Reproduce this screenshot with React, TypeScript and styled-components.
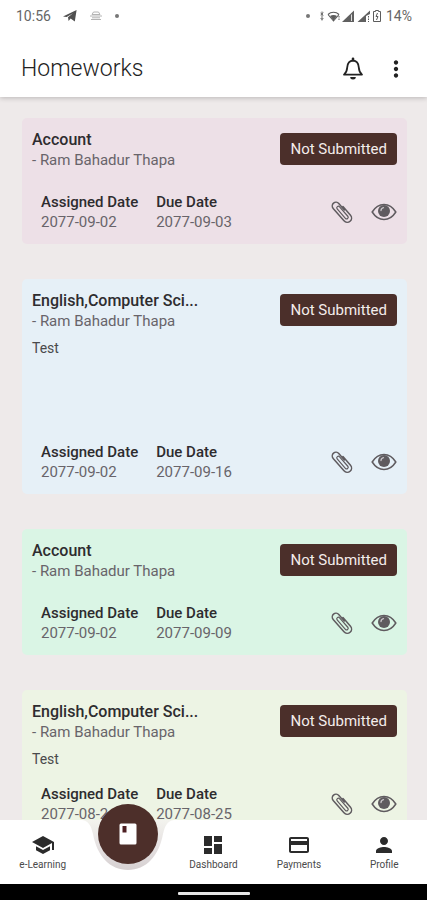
import React from "react";
import styled, { createGlobalStyle } from "styled-components";
import {
  MdSchool,
  MdDashboard,
  MdCreditCard,
  MdPerson,
  MdMoreVert,
} from "react-icons/md";

const GlobalStyle = createGlobalStyle`
  *, *::before, *::after { box-sizing: border-box; }
  body {
    margin: 0;
    background: #eeeaea;
    color: #2e2c2f;
    font-family: Roboto, "Liberation Sans", sans-serif;
  }
  h1, h2, p, dl, dt, dd, ul { margin: 0; padding: 0; }
  button { border: 0; padding: 0; background: none; color: inherit; font: inherit; cursor: pointer; }
  svg { display: block; flex: none; }
`;

const Screen = styled.div`
  display: flex;
  flex-direction: column;
  height: 100vh;
`;

const StatusBar = styled.div`
  position: relative;
  z-index: 2;
  display: flex;
  align-items: center;
  justify-content: space-between;
  height: 32px;
  padding: 0 15px 0 16px;
  background: #fff;
  color: #666;
  font-size: 14px;
  line-height: 16px;
`;

const StatusGroup = styled.div<{ $gap: number }>`
  display: flex;
  align-items: center;
  gap: ${(p) => p.$gap}px;
`;

const Dot = styled.span`
  width: 4px;
  height: 4px;
  margin-right: 6px;
  border-radius: 50%;
  background: #777;
`;

const AppBar = styled.header`
  position: relative;
  z-index: 1;
  display: flex;
  align-items: center;
  justify-content: space-between;
  height: 65px;
  padding: 8px 18px 0 21px;
  background: #fff;
  box-shadow: 0 1px 5px rgba(0, 0, 0, 0.22);
`;

const PageTitle = styled.h1`
  font-size: 23px;
  line-height: 28px;
  font-weight: 300;
  color: #222;
`;

const Actions = styled.div`
  display: flex;
  align-items: center;
  gap: 18px;
  color: #222;
`;

const List = styled.main`
  flex: 1;
  min-height: 0;
  overflow-y: auto;
  scrollbar-width: none;
  display: flex;
  flex-direction: column;
  gap: 35px;
  padding: 21px 20px 0 22px;
`;

const Card = styled.article<{ $tint: string }>`
  flex: none;
  padding: 12px 10px;
  border-radius: 5px;
  background: ${(p) => p.$tint};
`;

const CardHead = styled.div`
  display: flex;
  align-items: flex-start;
  justify-content: space-between;
`;

const Heading = styled.div`
  flex: 1;
  min-width: 0;
`;

const Subject = styled.h2`
  white-space: nowrap;
  font-size: 16px;
  line-height: 20px;
  font-weight: 500;
`;

const Teacher = styled.p`
  font-size: 15px;
  line-height: 20px;
  color: #68646a;
`;

const Badge = styled.button`
  && {
    height: 32px;
    margin-top: 3px;
    padding: 0 10px;
    border-radius: 4px;
    background: #4b2f2a;
    color: #f4ecea;
    font-size: 15px;
    line-height: 20px;
    white-space: nowrap;
  }
`;

const Description = styled.p<{ $space: number }>`
  min-height: ${(p) => p.$space}px;
  margin-top: 7px;
  font-size: 14px;
  line-height: 20px;
  color: #4a4a4c;
`;

const CardFoot = styled.div<{ $spaced: boolean }>`
  display: flex;
  align-items: center;
  justify-content: space-between;
  margin-top: ${(p) => (p.$spaced ? 22 : 0)}px;
  padding-left: 9px;
`;

const Dates = styled.dl`
  display: flex;
  gap: 18px;
`;

const DateLabel = styled.dt`
  font-size: 15px;
  line-height: 20px;
  font-weight: 500;
`;

const DateValue = styled.dd`
  font-size: 15px;
  line-height: 20px;
  color: #68646a;
`;

const CardActions = styled.div`
  display: flex;
  align-items: center;
  gap: 18px;
  color: #5f5b5f;
`;

const BottomNav = styled.nav`
  position: relative;
  z-index: 2;
  display: grid;
  grid-template-columns: repeat(5, 1fr);
  height: 64px;
  background: #fff;
`;

const NavItem = styled.button`
  display: flex;
  flex-direction: column;
  align-items: center;
  && { padding-top: 13px; }
  color: #2b2b2b;
`;

const NavLabel = styled.span`
  margin-top: 1px;
  font-size: 10px;
  line-height: 14px;
  color: #4a4a4a;
`;

const FabSlot = styled.div`
  position: relative;
  display: flex;
  justify-content: center;
`;

const Notch = styled.svg`
  position: absolute;
  top: 0;
  left: 50%;
  transform: translateX(-50%);
`;

const Fab = styled.button`
  position: absolute;
  top: -16px;
  display: flex;
  align-items: center;
  justify-content: center;
  width: 60px;
  height: 60px;
  && {
    border-radius: 50%;
    background: #4d2f2a;
  }
`;

const SystemBar = styled.div`
  display: flex;
  justify-content: center;
  align-items: center;
  height: 16px;
  padding-top: 2px;
  background: #000;
`;

const HomeHandle = styled.span`
  width: 72px;
  height: 3px;
  border-radius: 1px;
  background: #e6e6e6;
`;

const TelegramIcon = () => (
  <svg width="14" height="14" viewBox="0 0 14 14" aria-hidden="true">
    <path d="M0 7.400 13.600 1 11.800 12.600 7.600 9.600 5.600 12 5 8.200 10 4.200 3.600 8Z" fill="#505050" />
  </svg>
);

const TrayIcon = () => (
  <svg width="14" height="12" viewBox="0 0 14 12" fill="none" stroke="#b4b4b4" aria-hidden="true">
    <path d="M3 4.500 4.500 2h5L11 4.500zM1 6h12M2 9.500h10M3 7.800h8" />
  </svg>
);

const PhoneStatusIcons = () => (
  <svg width="62" height="16" viewBox="0 0 62 16" fill="none" stroke="#5c5c5c" aria-hidden="true">
    <path d="M2 3.500v9M.6 5 3.400 7.500M3.400 4.500.6 7M.6 10 2 11.500 3.400 10" strokeWidth=".9" />
    <path d="M8 6.500c3-3 8-3 11 0M8 6.500 13.500 13 19 6.500" strokeWidth="1.100" />
    <path d="M10 8c2-1.500 5-1.500 7 0l-3.500 4.500z" fill="#5c5c5c" stroke="none" />
    <path d="M19 8v5" strokeDasharray="1.500 1" />
    <path d="M22 14 34 2.500V14z" fill="#606060" stroke="none" />
    <path d="M31.500 6.500V13" stroke="#ddd" />
    <path d="M37.500 14 50 2.500V6l-4 2v6z" fill="#606060" stroke="none" />
    <path d="M48.500 8v6" strokeDasharray="1.500 1" />
    <path d="M55.500 3.500V2.500h3v1H60.500V13.500H53.500V3.500z" />
    <path d="m57.500 5-1.500 3.500h2L56.500 12" />
  </svg>
);

const BellIcon = () => (
  <svg width="24" height="26" viewBox="0 0 24 26" fill="none" stroke="currentColor" strokeWidth="1.800" strokeLinejoin="round" strokeLinecap="round" aria-hidden="true">
    <path d="M3 18.600h18C18.800 16.800 18 15 17.800 11.500 17.500 7.300 15.800 4.600 12 4.600S6.500 7.300 6.200 11.500C6 15 5.200 16.800 3 18.600z" />
    <path d="M12 2.800v1.500" strokeWidth="2.600" />
    <path d="M9.200 21h5.600a2.800 2.500 0 0 1-5.600 0z" fill="currentColor" stroke="none" />
  </svg>
);

const ClipIcon = () => (
  <svg width="22" height="24" viewBox="0 0 22 24" fill="none" stroke="currentColor" strokeWidth="1.500" strokeLinecap="round" strokeLinejoin="round" aria-hidden="true">
    <g transform="translate(11 12) rotate(-41)">
      <path d="M4.300-3.500V8A4.300 4.300 0 0 1-4.300 8V-8.500A3.700 3.700 0 0 1 3.100-8.500V0" />
      <path d="M-1.600 4V-5.500A1.400 1.400 0 0 1 1.600-5.500V7A1.600 1.600 0 0 1-1.600 7V4" strokeWidth="1.200" />
    </g>
  </svg>
);

const EyeIcon = () => (
  <svg width="26" height="20" viewBox="0 0 26 20" fill="none" aria-hidden="true">
    <path d="M1.200 10C4 5.500 8 2.500 13 2.500S22 5.500 24.800 10C22 14.500 18 17.500 13 17.500S4 14.500 1.200 10z" stroke="currentColor" strokeWidth="1.500" />
    <circle cx="13" cy="9" r="6" fill="currentColor" />
    <path d="M10 8.500c.1-1.600 1-2.500 2.500-2.800" stroke="#c8c4c8" strokeWidth="1.300" strokeLinecap="round" />
  </svg>
);

const BookIcon = () => (
  <svg width="18" height="22" viewBox="0 0 18 22" aria-hidden="true">
    <rect x=".5" y=".5" width="17" height="21" rx="1.500" fill="#fff" />
    <path d="M3.500 3H7.500V9.500H3.500z" fill="#4d1f22" />
  </svg>
);

type Homework = {
  id: number;
  subject: string;
  teacher: string;
  note?: string;
  noteSpace?: number;
  assigned: string;
  due: string;
  tint: string;
};

const homeworks: Homework[] = [
  { id: 1, subject: "Account", teacher: "Ram Bahadur Thapa", assigned: "2077-09-02", due: "2077-09-03", tint: "#ede0e7" },
  { id: 2, subject: "English,Computer Sci...", teacher: "Ram Bahadur Thapa", note: "Test", noteSpace: 104, assigned: "2077-09-02", due: "2077-09-16", tint: "#e6f0f7" },
  { id: 3, subject: "Account", teacher: "Ram Bahadur Thapa", assigned: "2077-09-02", due: "2077-09-09", tint: "#daf5e5" },
  { id: 4, subject: "English,Computer Sci...", teacher: "Ram Bahadur Thapa", note: "Test", noteSpace: 35, assigned: "2077-08-24", due: "2077-08-25", tint: "#edf4e4" },
];

const HomeworkCard = ({ item }: { item: Homework }) => (
  <Card $tint={item.tint}>
    <CardHead>
      <Heading>
        <Subject>{item.subject}</Subject>
        <Teacher>- {item.teacher}</Teacher>
      </Heading>
      <Badge type="button">Not Submitted</Badge>
    </CardHead>
    {item.note && <Description $space={item.noteSpace ?? 34}>{item.note}</Description>}
    <CardFoot $spaced={!item.note}>
      <Dates>
        <div>
          <DateLabel>Assigned Date</DateLabel>
          <DateValue>{item.assigned}</DateValue>
        </div>
        <div>
          <DateLabel>Due Date</DateLabel>
          <DateValue>{item.due}</DateValue>
        </div>
      </Dates>
      <CardActions>
        <button type="button" aria-label="Attachments"><ClipIcon /></button>
        <button type="button" aria-label="View homework"><EyeIcon /></button>
      </CardActions>
    </CardFoot>
  </Card>
);

export default function App() {
  return (
    <>
      <GlobalStyle />
      <Screen>
        <StatusBar>
          <StatusGroup $gap={12}>
            <span>10:56</span>
            <TelegramIcon />
            <TrayIcon />
            <Dot />
          </StatusGroup>
          <StatusGroup $gap={4}>
            <Dot />
            <PhoneStatusIcons />
            <span>14%</span>
          </StatusGroup>
        </StatusBar>
        <AppBar>
          <PageTitle>Homeworks</PageTitle>
          <Actions>
            <button type="button" aria-label="Notifications"><BellIcon /></button>
            <button type="button" aria-label="More options"><MdMoreVert size={26} /></button>
          </Actions>
        </AppBar>
        <List>
          {homeworks.map((item) => (
            <HomeworkCard key={item.id} item={item} />
          ))}
        </List>
        <BottomNav>
          <NavItem type="button">
            <MdSchool size={24} />
            <NavLabel>e-Learning</NavLabel>
          </NavItem>
          <FabSlot>
            <Notch width="92" height="52" viewBox="0 0 92 52" aria-hidden="true">
              <defs>
                <linearGradient id="notchShade" x1="0" y1="0" x2="0" y2="1">
                  <stop offset="0" stopColor="#f3f3ee" />
                  <stop offset=".5" stopColor="#e6e2e2" />
                  <stop offset="1" stopColor="#d6d0d1" />
                </linearGradient>
              </defs>
              <path d="M0 0C7 1 9 6 11 14 15 36 28 50 46 50S77 36 81 14C83 6 85 1 92 0z" fill="url(#notchShade)" />
            </Notch>
            <Fab type="button" aria-label="Homeworks"><BookIcon /></Fab>
          </FabSlot>
          <NavItem type="button">
            <MdDashboard size={24} />
            <NavLabel>Dashboard</NavLabel>
          </NavItem>
          <NavItem type="button">
            <MdCreditCard size={24} />
            <NavLabel>Payments</NavLabel>
          </NavItem>
          <NavItem type="button">
            <MdPerson size={24} />
            <NavLabel>Profile</NavLabel>
          </NavItem>
        </BottomNav>
        <SystemBar>
          <HomeHandle />
        </SystemBar>
      </Screen>
    </>
  );
}
